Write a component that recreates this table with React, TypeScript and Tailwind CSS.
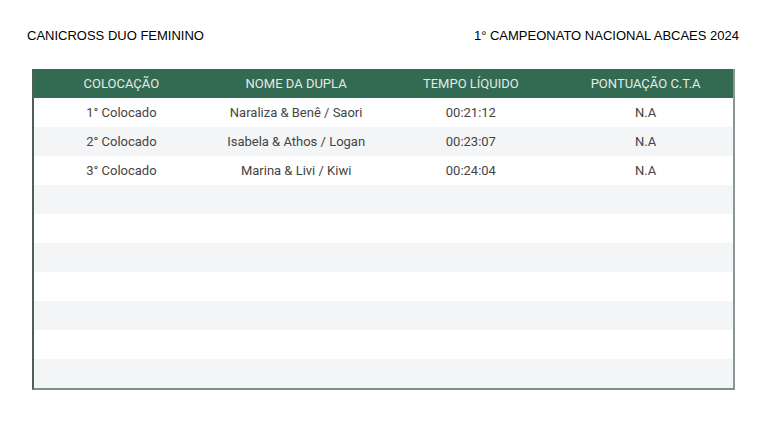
const COLUMNS = ["COLOCAÇÃO", "NOME DA DUPLA", "TEMPO LÍQUIDO", "PONTUAÇÃO C.T.A"];

const RESULTS: string[][] = [
  ["1° Colocado", "Naraliza & Benê / Saori", "00:21:12", "N.A"],
  ["2° Colocado", "Isabela & Athos / Logan", "00:23:07", "N.A"],
  ["3° Colocado", "Marina & Livi / Kiwi", "00:24:04", "N.A"],
];

const TOTAL_ROWS = 10;

export default function App() {
  const rows = Array.from({ length: TOTAL_ROWS }, (_, i) => RESULTS[i] ?? ["", "", "", ""]);

  return (
    <main className="h-[431px] w-[768px] bg-white font-['Roboto',sans-serif]">
      {/* Title bar */}
      <header className="flex items-center justify-between px-[27px] pt-[26px] font-['Liberation_Sans',Arial,sans-serif] text-[13px] text-black">
        <h1>CANICROSS DUO FEMININO</h1>
        <h2 className="pr-[2px]">1° CAMPEONATO NACIONAL ABCAES 2024</h2>
      </header>

      {/* Results table */}
      <div className="ml-[32px] mt-[23px] w-[703px] border-b-2 border-l-2 border-r-2 border-b-[#7f8d88] border-l-[#4f5f58] border-r-[#8a9792]">
        <div className="grid h-[29px] grid-cols-4 items-center bg-[#326a52] pt-px text-[13px] text-[#e3ece7]">
          {COLUMNS.map((c) => (
            <div key={c} className="text-center">
              {c}
            </div>
          ))}
        </div>
        {rows.map((r, i) => (
          <div
            key={i}
            className={`grid h-[29px] grid-cols-4 items-center pt-[2px] text-[13px] text-[#444] ${
              i % 2 === 0 ? "bg-white" : "bg-[#f4f5f7]"
            }`}
          >
            {r.map((cell, j) => (
              <div key={j} className="text-center">
                {cell}
              </div>
            ))}
          </div>
        ))}
      </div>
    </main>
  );
}
